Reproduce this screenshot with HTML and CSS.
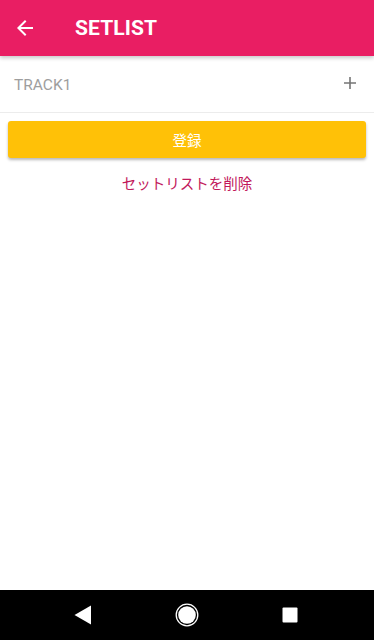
FILE: index.html
```html
<!DOCTYPE html>
<html lang="ja">
<head>
<meta charset="utf-8">
<title>SETLIST</title>
<link rel="stylesheet" href="styles.css">
</head>
<body>
<div class="screen">
  <header class="appbar">
    <svg class="back" width="24" height="24" viewBox="0 0 24 24"><path d="M20 11H7.83l5.59-5.59L12 4l-8 8 8 8 1.41-1.41L7.83 13H20v-2z" fill="#fff"/></svg>
    <h1 class="title">SETLIST</h1>
  </header>
  <div class="track-row">
    <span class="track-name">TRACK1</span>
    <svg class="plus" width="14" height="14" viewBox="0 0 14 14"><path d="M7 1v12M1 7h12" stroke="#757575" stroke-width="1.6"/></svg>
  </div>
  <div class="actions">
    <button class="register">登録</button>
    <a class="delete">セットリストを削除</a>
  </div>
  <div class="spacer"></div>
  <nav class="navbar">
    <svg width="18" height="20" viewBox="0 0 18 20"><path d="M17 0.5V19.5L0.5 10Z" fill="#fff"/></svg>
    <svg width="24" height="24" viewBox="0 0 24 24"><circle cx="12" cy="12" r="10.8" fill="none" stroke="#fff" stroke-width="1.3"/><circle cx="12" cy="12" r="8.8" fill="#fff"/></svg>
    <svg width="16" height="16" viewBox="0 0 16 16"><rect x="0.5" y="0.5" width="15" height="15" rx="1" fill="#fff"/></svg>
  </nav>
</div>
</body>
</html>
```
FILE: styles.css
```css
html, body {
  margin: 0;
  padding: 0;
  background: #fff;
}
.screen {
  width: 374px;
  height: 640px;
  display: flex;
  flex-direction: column;
  font-family: Roboto, "Noto Sans CJK JP", sans-serif;
  overflow: hidden;
}
.appbar {
  height: 56px;
  flex: none;
  background: #e91e63;
  display: flex;
  align-items: center;
  padding-left: 13px;
  box-shadow: 0 2px 4px rgba(0,0,0,0.22);
  position: relative;
  z-index: 1;
}
.back {
  display: block;
}
.title {
  margin: 0 0 0 38px;
  color: #fff;
  font-size: 21px;
  font-weight: 700;
  letter-spacing: 0.1px;
}
.track-row {
  height: 56px;
  flex: none;
  display: flex;
  align-items: center;
  justify-content: space-between;
  padding: 0 17px 0 14px;
  border-bottom: 1px solid #ececec;
}
.track-name {
  color: #9e9e9e;
  font-size: 15.5px;
  padding-top: 2px;
}
.plus {
  display: block;
  margin-top: -2px;
}
.actions {
  display: flex;
  flex-direction: column;
  align-items: center;
  padding: 8px 8px 0;
}
.register {
  width: 358px;
  height: 37px;
  border: none;
  border-radius: 3px;
  background: #ffc107;
  color: #fff;
  font-family: "Noto Sans CJK JP", sans-serif;
  font-size: 14.5px;
  box-shadow: 0 2px 3px rgba(0,0,0,0.28);
  padding: 0;
}
.delete {
  margin-top: 14px;
  color: #c2185b;
  font-family: "Noto Sans CJK JP", sans-serif;
  font-size: 14.5px;
  line-height: 22px;
}
.spacer {
  flex: 1;
}
.navbar {
  height: 50px;
  flex: none;
  background: #000;
  display: flex;
  align-items: center;
  justify-content: space-between;
  padding: 0 76px 0 74px;
}
.navbar svg {
  display: block;
}
```
